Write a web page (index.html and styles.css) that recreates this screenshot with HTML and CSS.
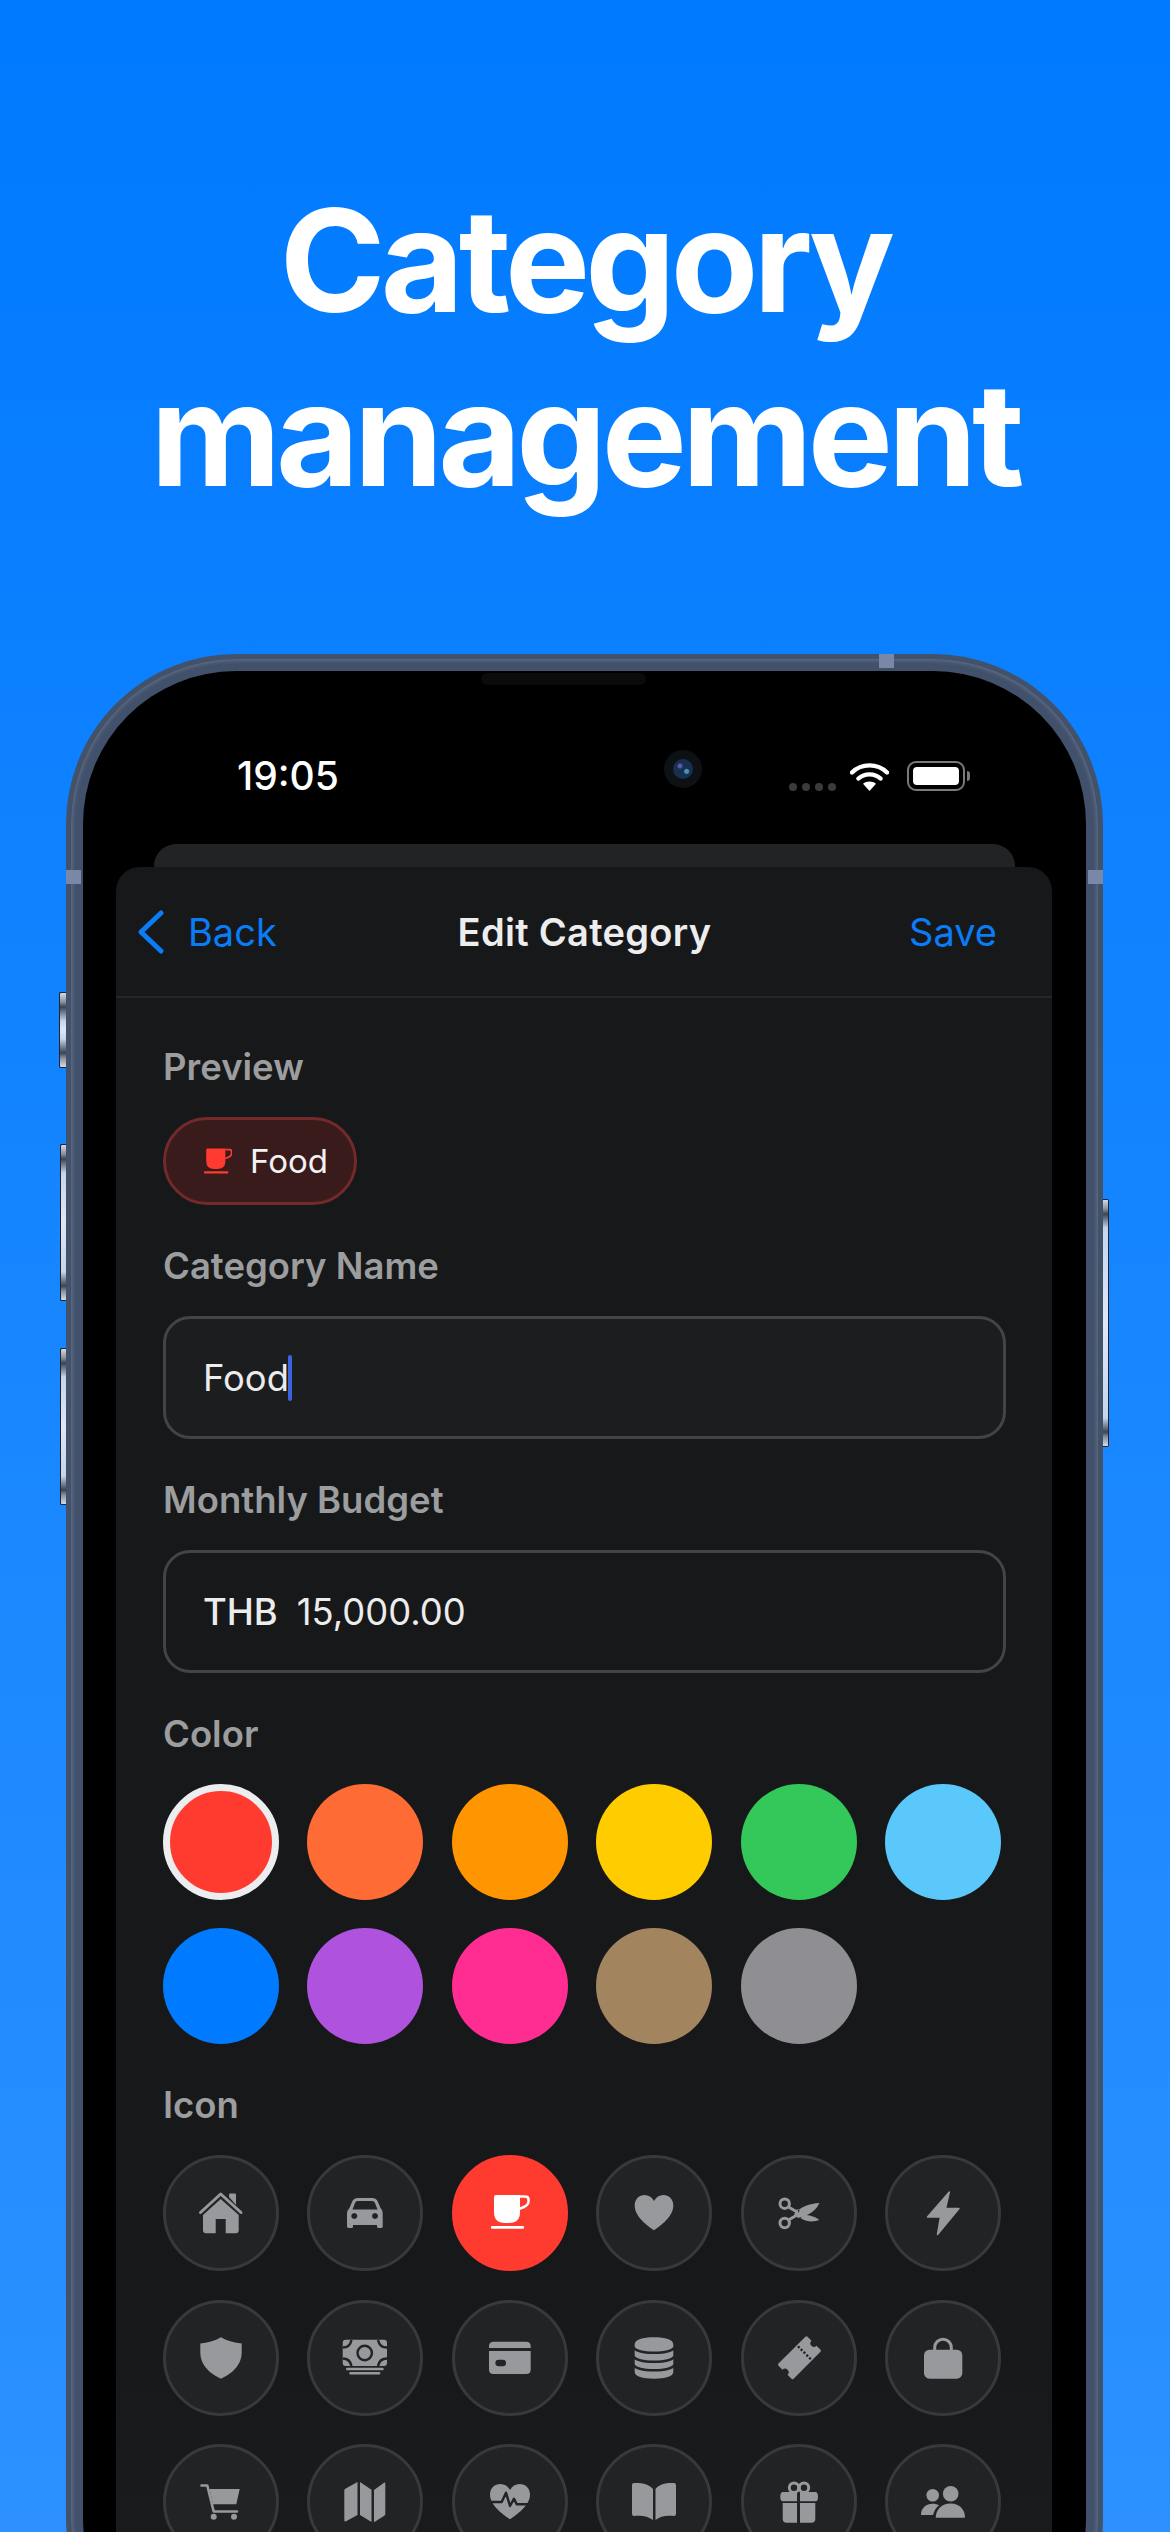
FILE: index.html
```html
<!DOCTYPE html>
<html lang="en">
<head>
<meta charset="utf-8">
<title>Category management</title>
<link rel="stylesheet" href="styles.css">
</head>
<body>
<div class="page">
  <h1 class="title">Category<br>management</h1>
  <div class="phone">
    <span class="btn btn-mute"></span>
    <span class="btn btn-up"></span>
    <span class="btn btn-down"></span>
    <span class="btn btn-power"></span>
    <span class="band band-left"></span>
    <span class="band band-right"></span>
    <span class="band band-top"></span>
    <div class="screen">
      <span class="speaker"></span>
      <span class="camera"><span class="lens"></span></span>
      <div class="status">
        <span class="time">19:05</span>
        <span class="status-right">
          <span class="dots"><i></i><i></i><i></i><i></i></span>
          <svg class="wifi" viewBox="0 0 39 29"><path d="M2 10.5C11.5 1 27.500 1 37 10.500M8.500 16.500C14.500 11 24.500 11 30.500 16.500" fill="none" stroke="#fff" stroke-width="4.400" stroke-linecap="round"/><path d="M19.500 29L13 21.800C16.500 18.700 22.500 18.700 26 21.800Z" fill="#fff"/></svg>
          <span class="battery"><span class="battery-fill"></span></span>
        </span>
      </div>
      <div class="back-sheet"></div>
      <div class="sheet">
        <div class="nav">
          <span class="nav-back">
            <svg class="chevron" viewBox="0 0 27 44"><path d="M24 3L4 22L24 41" fill="none" stroke="#0a7cf5" stroke-width="5" stroke-linecap="round" stroke-linejoin="round"/></svg>
            <span>Back</span>
          </span>
          <span class="nav-title">Edit Category</span>
          <span class="nav-save">Save</span>
        </div>
        <div class="form">
          <section class="field">
            <div class="label">Preview</div>
            <div class="chip">
              <svg class="chip-icon" viewBox="39 38 38 38"><path class="fill-red" d="M42 42q0-2 2-2H68V57q0 11-11 11H53q-11 0-11-11Z"/><path d="M68 41.500h5q3.500 0 3.500 3v2q0 4.500-8.500 7" fill="none" stroke="#ff3b30" stroke-width="2.500"/><rect class="fill-red" x="39" y="71" width="33" height="2.800" rx="1"/></svg>
              <span class="chip-text">Food</span>
            </div>
          </section>
          <section class="field">
            <div class="label">Category Name</div>
            <div class="input input-focus"><span>Food</span><span class="caret"></span></div>
          </section>
          <section class="field">
            <div class="label">Monthly Budget</div>
            <div class="input"><span class="currency">THB</span><span>15,000.00</span></div>
          </section>
          <section class="field">
            <div class="label">Color</div>
            <div class="grid">
              <span class="swatch swatch-selected c-red"></span>
              <span class="swatch c-orange"></span>
              <span class="swatch c-amber"></span>
              <span class="swatch c-yellow"></span>
              <span class="swatch c-green"></span>
              <span class="swatch c-sky"></span>
              <span class="swatch c-blue"></span>
              <span class="swatch c-purple"></span>
              <span class="swatch c-pink"></span>
              <span class="swatch c-brown"></span>
              <span class="swatch c-gray"></span>
            </div>
          </section>
          <section class="field">
            <div class="label">Icon</div>
            <div class="grid">
              <span class="icon"><svg viewBox="0 0 116 116"><path d="M57.700 44L40 60V75q0 3.300 3 3.300H52.700V64H62.700V78.300H72.700q3 0 3-3.300V60Z"/><path class="line" d="M37.500 57.500L57.700 39L78 57.500"/><path d="M66 42V39.500q0-1 1-1h5q1 0 1 1V50Z"/></svg></span>
              <span class="icon"><svg viewBox="0 0 116 116"><path fill-rule="evenodd" d="M51 43H65C68 43 70 44.500 71 47L73.500 53C75 54.500 75.700 56.500 75.700 58.500V71.500Q75.700 73 74 73H71.500Q70 73 70 71.500V70H46V71.500Q46 73 44.500 73H42Q40 73 40 71.500V58.500C40 56.500 41 54.500 42.500 53L45 47C46 44.500 48 43 51 43ZM51 46C49.500 46 48.500 46.800 48 48L45.500 54.500H70.500L68 48C67.500 46.800 66.500 46 65 46ZM47.300 58a3 3 0 1 0 .01 0ZM68 58a3 3 0 1 0 .01 0Z"/></svg></span>
              <span class="icon icon-selected"><svg viewBox="0 0 116 116"><path d="M42 42q0-2 2-2H68V57q0 11-11 11H53q-11 0-11-11Z"/><path class="line-thin" d="M68 41.500h5q3.500 0 3.500 3v2q0 4.500-8.500 7"/><rect x="39" y="71" width="33" height="2.800" rx="1"/></svg></span>
              <span class="icon"><svg viewBox="0 0 116 116"><path d="M58 75.300C52 71 38.700 62 38.700 50.500C38.700 44 43.500 40 48.500 40C52.500 40 56 42 58 46C60 42 63.500 40 67.500 40C72.500 40 77.300 44 77.300 50.500C77.300 62 64 71 58 75.300Z"/></svg></span>
              <span class="icon"><svg viewBox="0 0 116 116"><circle class="line" cx="43.700" cy="48.700" r="4.700"/><circle class="line" cx="43.700" cy="68" r="4.700"/><path class="line" d="M47.500 52L56 57M47.500 65L56 60"/><path fill-rule="evenodd" d="M53 59C59 52 69 48.500 78.300 48C76 55 67 61 57 63ZM56.700 54.200a1.700 1.700 0 1 0 .01 0Z"/><path d="M63 60C69 60 75 62 78.300 65C72 67.500 64 66.500 59.500 63Z"/></svg></span>
              <span class="icon"><svg viewBox="0 0 116 116"><path class="solid" d="M64.300 37L42.500 62H55.500L52.500 79.500L74 53.500H60.500Z"/></svg></span>

              <span class="icon"><svg viewBox="0 0 116 116"><path d="M58 37.300C64 41 72 43 78.700 43.500V52C78.700 66 68 74 58 78.700C48 74 37.300 66 37.300 52V43.500C44 43 52 41 58 37.300Z"/></svg></span>
              <span class="icon"><svg viewBox="0 0 116 116"><rect x="35.700" y="39.700" width="44.300" height="26.300" rx="3"/><circle class="cut" cx="57.700" cy="53" r="7.200"/><path class="cut" d="M35.700 47.500Q43 47.500 44.500 40M80 47.500Q72.500 47.500 71 40M35.700 58.500Q43 58.500 44.500 66M80 58.500Q72.500 58.500 71 66"/><rect x="39" y="67.800" width="37.700" height="2.500" rx="1"/><rect x="42.300" y="72" width="31" height="2.500" rx="1"/></svg></span>
              <span class="icon"><svg viewBox="0 0 116 116"><path fill-rule="evenodd" d="M41.500 41.700H74.200Q78.700 41.700 78.700 46.200V48H37V46.200Q37 41.700 41.500 41.700ZM37 51H78.700V69.500Q78.700 74 74.200 74H41.500Q37 74 37 69.500ZM46.700 59.700a3 3 0 0 0 0 6.600h4a3 3 0 0 0 0-6.600Z"/></svg></span>
              <span class="icon"><svg viewBox="0 0 116 116"><path d="M38.700 44.500c0-5 8-7.200 19.300-7.200s19.300 2.200 19.300 7.200V72c0 4.500-8 6.700-19.300 6.700s-19.300-2.200-19.300-6.700Z"/><path class="cut" d="M37.500 47.500C42 54.500 74 54.500 78.500 47.500M37.500 56.500C42 63.500 74 63.500 78.500 56.500M37.500 65C42 72 74 72 78.500 65"/></svg></span>
              <span class="icon"><svg viewBox="0 0 116 116"><g transform="rotate(-45 58.500 57.700)"><rect x="38" y="47" width="41" height="21.400" rx="1.500"/><circle class="hole" cx="38" cy="57.700" r="3.600"/><circle class="hole" cx="79" cy="57.700" r="3.600"/><path class="perf" d="M65.500 48.500V67"/></g></svg></span>
              <span class="icon"><svg viewBox="0 0 116 116"><path class="line" d="M49.700 51V47.500a8.300 8.300 0 0 1 16.600 0V51"/><rect x="39" y="49.700" width="38.300" height="29" rx="5.500"/></svg></span>

              <span class="icon"><svg viewBox="0 0 116 116"><path class="line-thin2" d="M38.500 41.500H44.300L50.700 67.500H74"/><path d="M46.500 45H76.700L73.300 60.300H50Z"/><circle cx="50.700" cy="72.700" r="3"/><circle cx="71" cy="72.700" r="3"/></svg></span>
              <span class="icon"><svg viewBox="0 0 116 116"><path d="M37.300 46.500q0-1.200 1-1.800L50.500 38V71L39 77.300q-1.700.7-1.700-1.300Z"/><path d="M53 38L64.500 45.800V78L53 71Z"/><path d="M67 46L77 38.700q1.300-.7 1.300 1V70q0 1.200-1 1.800L67 78.300Z"/></svg></span>
              <span class="icon"><svg viewBox="0 0 116 116"><path d="M58 75.300C52 71 38 62 38 50.500C38 44 43 40 48.300 40C52.500 40 56 42 58 46C60 42 63.500 40 67.700 40C73 40 78 44 78 50.500C78 62 64 71 58 75.300Z"/><path class="cut-pulse" d="M36 58H49.700L54 48.700L58 62L62 54.700L64.700 60.300H80"/></svg></span>
              <span class="icon"><svg viewBox="0 0 116 116"><path d="M36 41q0-2 2-2C46 38.700 53 40 57 45V76C52 72 45 71 38 72q-2 0-2-2Z"/><path d="M59.500 45C63 40 70 38.700 78 39q2 0 2 2V70q0 2-2 2C71 71 64 72 59.500 76Z"/></svg></span>
              <span class="icon"><svg viewBox="0 0 116 116"><circle class="line" cx="53" cy="43.700" r="4.700"/><circle class="line" cx="63" cy="43.700" r="4.700"/><path d="M42 48H56V57.300H42Q39.300 57.300 39.300 52.700T42 48ZM59 48H74.300Q77 48 77 52.700T74.300 57.300H59Z"/><path d="M41.700 59H56V78.700H45.700Q41.700 78.700 41.700 74.700ZM59 59H74.300V74.700Q74.300 78.700 70.300 78.700H59Z"/></svg></span>
              <span class="icon"><svg viewBox="0 0 116 116"><circle cx="65.700" cy="49.700" r="7.800"/><circle cx="47.700" cy="51.300" r="6.300"/><path d="M50.700 73.700C51 65 57 59.500 65.500 59.500C74 59.500 80 65 80 73.700Z"/><path d="M36 71C36 64 41 59.700 47.700 59.700C50 59.700 52 60.200 54 61.200C51 63.500 49 67 48 71Z"/></svg></span>
            </div>
          </section>
        </div>
      </div>
    </div>
  </div>
</div>
</body>
</html>
```

FILE: styles.css
```css
* { box-sizing: border-box; }

html, body {
  margin: 0;
  padding: 0;
}

body {
  font-family: Inter, "Liberation Sans", sans-serif;
}

.page {
  height: 2532px;
  overflow: hidden;
  padding-top: 173px;
  background: linear-gradient(180deg, #007aff 0%, #2c91ff 100%);
}

.title {
  margin: 0;
  height: 481px;
  color: #fff;
  font-size: 143px;
  line-height: 174px;
  font-weight: 700;
  letter-spacing: -4.9px;
  text-align: center;
}

.phone {
  position: relative;
  width: 1037px;
  margin-left: 66px;
  padding: 12px;
  border: 5px solid #43526b;
  border-radius: 170px;
  background: #42516b;
  box-shadow: inset 0 0 4px 1px #67758c;
}

.btn {
  position: absolute;
  width: 7px;
  border: 1px solid #1d2531;
  background: linear-gradient(180deg, #d6dbe4 0, #8b919c 9px, #3a4350 14px, #c9d4ea 28px, #dfe6f5 50%, #c9d4ea calc(100% - 28px), #3a4350 calc(100% - 14px), #8b919c calc(100% - 9px), #d6dbe4 100%);
}

.btn-mute {
  left: -12px;
  top: 333px;
  height: 76px;
  border-right: 0;
  border-radius: 2px 0 0 2px;
}

.btn-up {
  left: -11px;
  top: 485px;
  height: 157px;
  width: 6px;
  border-right: 0;
  border-radius: 2px 0 0 2px;
}

.btn-down {
  left: -11px;
  top: 689px;
  height: 157px;
  width: 6px;
  border-right: 0;
  border-radius: 2px 0 0 2px;
}

.btn-power {
  right: -11px;
  top: 540px;
  height: 248px;
  width: 6px;
  border-left: 0;
  border-radius: 0 2px 2px 0;
}

.band {
  position: absolute;
  background: #7b87a6;
}

.band-left {
  left: -5px;
  top: 211px;
  width: 15px;
  height: 14px;
}

.band-right {
  right: -5px;
  top: 211px;
  width: 15px;
  height: 14px;
}

.band-top {
  left: 808px;
  top: -5px;
  width: 15px;
  height: 14px;
}

.screen {
  position: relative;
  overflow: hidden;
  height: 2000px;
  border-radius: 153px;
  background: #000;
}

.speaker {
  position: absolute;
  left: 398px;
  top: 2px;
  width: 165px;
  height: 12px;
  border-radius: 6px;
  background: #0b0b0b;
}

.camera {
  position: absolute;
  left: 581px;
  top: 79px;
  width: 38px;
  height: 38px;
  display: flex;
  align-items: center;
  justify-content: center;
  border-radius: 50%;
  background: #0e1114;
}

.lens {
  width: 20px;
  height: 20px;
  border-radius: 50%;
  background: radial-gradient(circle at 35% 35%, #5f55a8 0 2px, transparent 3px), radial-gradient(circle at 68% 62%, #4f8fb5 0 2px, transparent 3px), #16304f;
}

.status {
  height: 173px;
  padding: 87px 121px 0 154px;
  display: flex;
  justify-content: space-between;
  align-items: flex-start;
}

.time {
  color: #fff;
  font-size: 39px;
  line-height: 36px;
  font-weight: 500;
}

.status-right {
  display: flex;
  align-items: flex-end;
  height: 33px;
}

.dots {
  display: flex;
  gap: 5px;
  margin-right: 14px;
  margin-bottom: 0;
}

.dots i {
  width: 8px;
  height: 8px;
  border-radius: 50%;
  background: #3b3b3d;
}

.wifi {
  width: 39px;
  height: 29px;
  margin-right: 18px;
  display: block;
}

.battery {
  position: relative;
  display: block;
  width: 58px;
  height: 30px;
  padding: 4px;
  border: 2px solid #7a7a7c;
  border-radius: 9px;
}

.battery::after {
  content: "";
  position: absolute;
  right: -7px;
  top: 8px;
  width: 3px;
  height: 10px;
  border-radius: 0 3px 3px 0;
  background: #7a7a7c;
}

.battery-fill {
  display: block;
  height: 100%;
  border-radius: 4px;
  background: #fff;
}

.back-sheet {
  height: 23px;
  margin: 0 71px;
  border-radius: 22px 22px 0 0;
  background: #222325;
}

.sheet {
  margin: 0 34px 0 33px;
  height: 1900px;
  border-radius: 24px 24px 0 0;
  background: linear-gradient(180deg, #17181a 75%, #1a1b1c 90%);
}

.nav {
  height: 131px;
  padding: 0 55px 0 21px;
  display: grid;
  grid-template-columns: 1fr auto 1fr;
  align-items: center;
  border-bottom: 2px solid #252628;
  font-size: 38px;
}

.nav-back {
  display: flex;
  align-items: center;
  gap: 24px;
  color: #0a7cf5;
}

.chevron {
  width: 27px;
  height: 44px;
}

.nav-title {
  color: #ededee;
  font-weight: 600;
  letter-spacing: 0.3px;
  margin-left: 35px;
}

.nav-save {
  color: #0a7cf5;
  justify-self: end;
}

.form {
  padding: 45px 46px 0 47px;
  display: flex;
  flex-direction: column;
  gap: 37px;
}

.label {
  height: 48px;
  margin-bottom: 26px;
  color: #9c9d9f;
  font-size: 36.5px;
  line-height: 48px;
  font-weight: 600;
}

.chip {
  width: 194px;
  height: 88px;
  padding-left: 38px;
  display: flex;
  align-items: center;
  gap: 18px;
  border: 3px solid #74292a;
  border-radius: 44px;
  background: #3a1b1c;
}

.chip-icon {
  width: 28px;
  height: 28px;
}

.fill-red {
  fill: #ff3b30;
}

.chip-text {
  color: #f2f2f3;
  font-size: 33px;
}

.input {
  height: 123px;
  padding: 0 37px;
  display: flex;
  align-items: center;
  border: 3px solid #434446;
  border-radius: 27px;
  color: #ececed;
  font-size: 36.4px;
}

.input-focus {
  background: #1c1d1f;
}

.caret {
  width: 4px;
  height: 46px;
  margin-left: -1px;
  border-radius: 2px;
  background: #3a63e0;
}

.currency {
  font-weight: 500;
  margin-right: 19px;
}

.grid {
  display: grid;
  grid-template-columns: repeat(6, 116px);
  gap: 28.4px;
}

.swatch {
  height: 116px;
  border-radius: 50%;
}

.swatch-selected {
  border: 7px solid #ecedef;
}

.c-red { background: #ff3b30; }
.c-orange { background: #ff6b35; }
.c-amber { background: #ff9500; }
.c-yellow { background: #ffcc00; }
.c-green { background: #34c759; }
.c-sky { background: #5ac8fa; }
.c-blue { background: #007aff; }
.c-purple { background: #af52de; }
.c-pink { background: #ff2d92; }
.c-brown { background: #a2845e; }
.c-gray { background: #8e8e93; }

.icon {
  height: 116px;
  border: 3px solid #38393c;
  border-radius: 50%;
  background: #222325;
  color: #98999c;
  display: block;
}

.icon svg {
  display: block;
  width: 116px;
  height: 116px;
  margin: -3px;
  fill: currentColor;
}

.icon-selected {
  border-color: #ff3b30;
  background: #ff3b30;
  color: #fff;
}

.line,
.line-thin,
.line-thin2 {
  fill: none;
  stroke: currentColor;
  stroke-width: 3;
  stroke-linecap: round;
  stroke-linejoin: round;
}

.line-thin {
  stroke-width: 2.5;
}

.line-thin2 {
  stroke-width: 2.6;
}

.solid {
  stroke: currentColor;
  stroke-width: 1.5;
  stroke-linejoin: round;
}

.cut,
.cut-pulse,
.perf {
  fill: none;
  stroke: #222325;
  stroke-width: 2.4;
}

.cut-pulse {
  stroke-linejoin: round;
}

.perf {
  stroke-dasharray: 2.200 1.800;
}

.hole {
  fill: #222325;
}
```
